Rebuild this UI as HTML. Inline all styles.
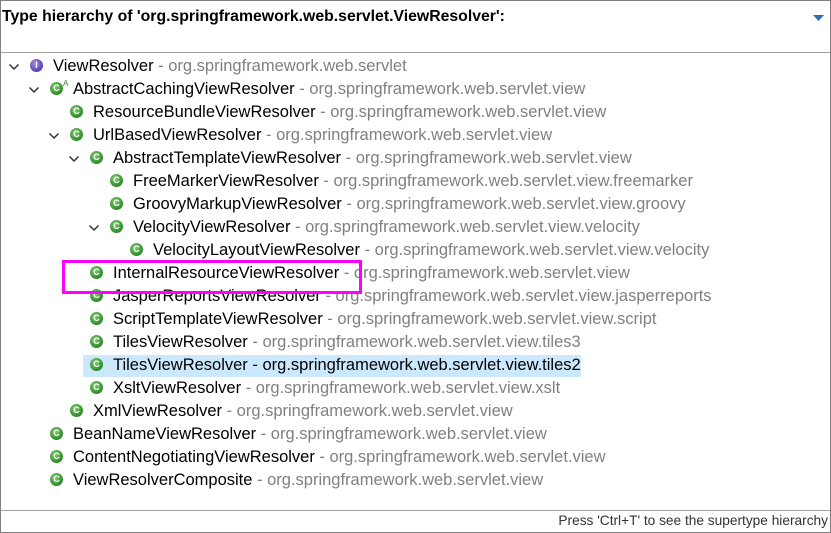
<!DOCTYPE html>
<html><head><style>
body{margin:0;width:831px;height:533px;overflow:hidden;background:#fff;font-family:"Liberation Sans",sans-serif;}
.frame{position:absolute;left:0;top:0;width:829px;height:531px;border:1px solid #808080;}
.title{position:absolute;left:2px;top:8px;font-weight:bold;font-size:15.8px;color:#000;}
.sep{position:absolute;left:1px;width:829px;height:1px;background:#a0a0a0;}
.row{position:absolute;height:23px;line-height:23px;font-size:16.5px;color:#000;white-space:nowrap;}
.pkg{color:#808080;}
.sel{position:absolute;left:83px;top:355px;width:498px;height:22px;background:#cce8ff;}
.ic{position:absolute;width:13px;height:13px;border-radius:50%;background:radial-gradient(circle at 40% 35%,#7fcf6f,#2f8a2a 70%,#1d5e1a);color:#fff;font-size:9px;font-weight:bold;line-height:13px;text-align:center;font-family:"Liberation Sans",sans-serif;}
.ii{background:radial-gradient(circle at 40% 35%,#a58fe0,#5a3fb0 70%,#3a2580);}
.chev{position:absolute;}
.footer{position:absolute;right:3px;top:513px;font-size:13.7px;color:#333;}
.mag{position:absolute;left:62px;top:260px;width:294px;height:28px;border:3px solid #ff00ff;}
</style></head><body>
<div class="frame"></div>
<div class="title">Type hierarchy of 'org.springframework.web.servlet.ViewResolver':</div>
<svg style="position:absolute;left:813px;top:15px" width="11" height="7"><path d="M0 0H11L5.5 6Z" fill="#2a6db0"/></svg>
<div class="sep" style="top:52px"></div>
<div class="sep" style="top:510px"></div>
<div class="sel"></div>
<div id="rows"></div>
<div class="mag"></div>
<div class="footer">Press 'Ctrl+T' to see the supertype hierarchy</div>
<script>
var R=[[0,1,'ViewResolver','org.springframework.web.servlet','i'],
[1,1,'AbstractCachingViewResolver','org.springframework.web.servlet.view','a'],
[2,0,'ResourceBundleViewResolver','org.springframework.web.servlet.view'],
[2,1,'UrlBasedViewResolver','org.springframework.web.servlet.view'],
[3,1,'AbstractTemplateViewResolver','org.springframework.web.servlet.view'],
[4,0,'FreeMarkerViewResolver','org.springframework.web.servlet.view.freemarker'],
[4,0,'GroovyMarkupViewResolver','org.springframework.web.servlet.view.groovy'],
[4,1,'VelocityViewResolver','org.springframework.web.servlet.view.velocity'],
[5,0,'VelocityLayoutViewResolver','org.springframework.web.servlet.view.velocity'],
[3,0,'InternalResourceViewResolver','org.springframework.web.servlet.view'],
[3,0,'JasperReportsViewResolver','org.springframework.web.servlet.view.jasperreports'],
[3,0,'ScriptTemplateViewResolver','org.springframework.web.servlet.view.script'],
[3,0,'TilesViewResolver','org.springframework.web.servlet.view.tiles3'],
[3,0,'TilesViewResolver','org.springframework.web.servlet.view.tiles2','s'],
[3,0,'XsltViewResolver','org.springframework.web.servlet.view.xslt'],
[2,0,'XmlViewResolver','org.springframework.web.servlet.view'],
[1,0,'BeanNameViewResolver','org.springframework.web.servlet.view'],
[1,0,'ContentNegotiatingViewResolver','org.springframework.web.servlet.view'],
[1,0,'ViewResolverComposite','org.springframework.web.servlet.view']];
var h='';
R.forEach(function(r,i){
 var y=55+i*23, tx=53+20*r[0];
 if(r[1]) h+='<svg class="chev" style="left:'+(tx-45)+'px;top:'+(y+7)+'px" width="12" height="10"><path d="M1.5 2.5L6 7L10.5 2.5" fill="none" stroke="#333" stroke-width="1.5"/></svg>';
 h+='<div class="ic'+(r[4]=='i'?' ii':'')+'" style="left:'+(tx-23)+'px;top:'+(y+4)+'px">'+(r[4]=='i'?'I':'C')+'</div>';
 if(r[4]=='a') h+='<div class="row" style="left:'+(tx-10)+'px;top:'+(y-6)+'px;font-size:8px;color:#2f8a2a">A</div>';
 var sel=r[4]=='s';
 h+='<div class="row" style="left:'+tx+'px;top:'+y+'px">'+r[2]+' <span class="pkg"'+(sel?' style="color:#000"':'')+'>- '+r[3]+'</span></div>';
});
document.getElementById('rows').innerHTML=h;
</script>
</body></html>
